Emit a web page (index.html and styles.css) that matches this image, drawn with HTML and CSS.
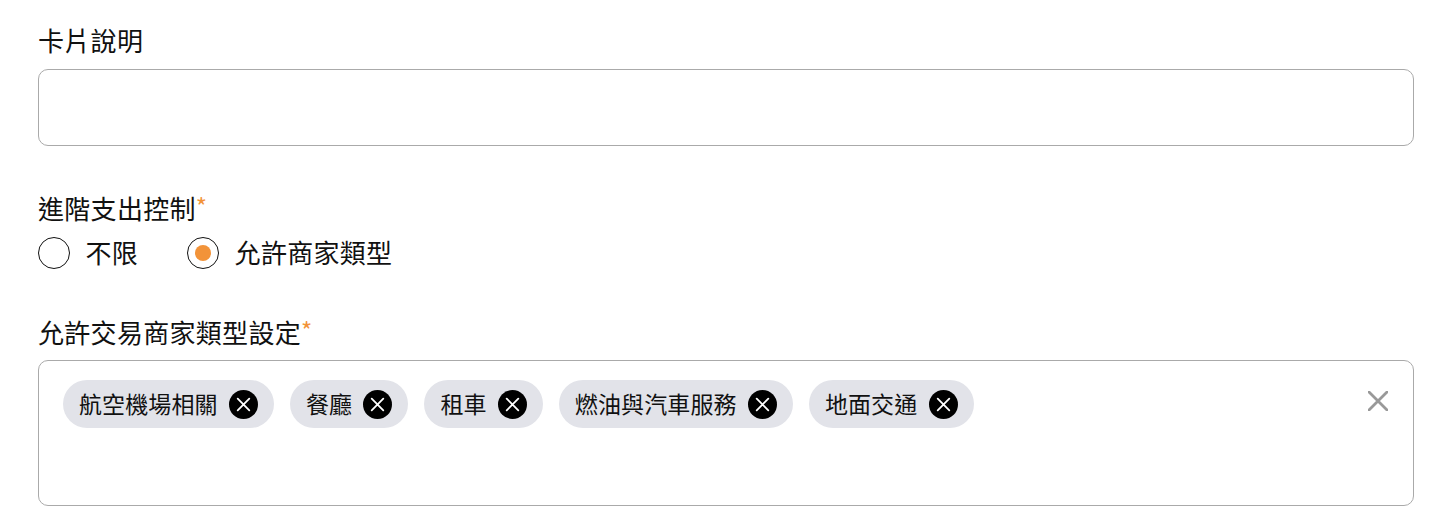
FILE: index.html
```html
<!DOCTYPE html>
<html>
<head>
<title>卡片設定</title>
<link rel="stylesheet" href="styles.css">
</head>
<body>
<div class="field field-desc">
  <div class="label">卡片說明</div>
  <div class="text-input"></div>
</div>

<div class="field field-control">
  <div class="label">進階支出控制<span class="req">*</span></div>
  <div class="radios">
    <div class="radio">
      <span class="circle"></span>
      <span class="radio-text">不限</span>
    </div>
    <div class="radio">
      <span class="circle checked"></span>
      <span class="radio-text">允許商家類型</span>
    </div>
  </div>
</div>

<div class="field">
  <div class="label">允許交易商家類型設定<span class="req">*</span></div>
  <div class="select-box">
    <div class="chips">
      <div class="chip"><span class="chip-text">航空機場相關</span><svg class="chip-x" viewBox="0 0 29 29"><circle cx="14.5" cy="14.5" r="14.5" fill="#000"/><path d="M8.7 8.7l11.6 11.6M20.3 8.7L8.7 20.3" stroke="#fff" stroke-width="1.8" stroke-linecap="round"/></svg></div>
      <div class="chip"><span class="chip-text">餐廳</span><svg class="chip-x" viewBox="0 0 29 29"><circle cx="14.5" cy="14.5" r="14.5" fill="#000"/><path d="M8.7 8.7l11.6 11.6M20.3 8.7L8.7 20.3" stroke="#fff" stroke-width="1.8" stroke-linecap="round"/></svg></div>
      <div class="chip"><span class="chip-text">租車</span><svg class="chip-x" viewBox="0 0 29 29"><circle cx="14.5" cy="14.5" r="14.5" fill="#000"/><path d="M8.7 8.7l11.6 11.6M20.3 8.7L8.7 20.3" stroke="#fff" stroke-width="1.8" stroke-linecap="round"/></svg></div>
      <div class="chip"><span class="chip-text">燃油與汽車服務</span><svg class="chip-x" viewBox="0 0 29 29"><circle cx="14.5" cy="14.5" r="14.5" fill="#000"/><path d="M8.7 8.7l11.6 11.6M20.3 8.7L8.7 20.3" stroke="#fff" stroke-width="1.8" stroke-linecap="round"/></svg></div>
      <div class="chip"><span class="chip-text">地面交通</span><svg class="chip-x" viewBox="0 0 29 29"><circle cx="14.5" cy="14.5" r="14.5" fill="#000"/><path d="M8.7 8.7l11.6 11.6M20.3 8.7L8.7 20.3" stroke="#fff" stroke-width="1.8" stroke-linecap="round"/></svg></div>
    </div>
    <svg class="clear-all" viewBox="0 0 20 20"><path d="M1 1l18 18M19 1L1 19" stroke="#999" stroke-width="2.8" stroke-linecap="round"/></svg>
  </div>
</div>
</body>
</html>
```

FILE: styles.css
```css
body {
  margin: 0;
  padding: 23px 28px 0 38px;
  background-color: #fff;
  color: #111;
  font-family: "Noto Sans CJK TC", "Liberation Sans", sans-serif;
  font-size: 26px;
  overflow: hidden;
}

.label {
  height: 36px;
  line-height: 34px;
  letter-spacing: 0.3px;
}

.req {
  color: #f29339;
  font-size: 24px;
  line-height: 20px;
  vertical-align: 3px;
}

.field-desc {
  margin-bottom: 45px;
}

.field-control {
  margin-bottom: 46px;
}

.text-input {
  height: 75px;
  margin-top: 10px;
  border: 1px solid #aaa;
  border-radius: 10px;
}

.radios {
  display: flex;
  gap: 49px;
  margin-top: 10px;
}

.radio {
  display: flex;
  align-items: center;
  gap: 15.5px;
  height: 32px;
}

.radio-text {
  line-height: 30px;
  height: 32px;
  letter-spacing: 0.3px;
}

.circle {
  box-sizing: border-box;
  width: 32px;
  height: 32px;
  border: 1px solid #111;
  border-radius: 50%;
  display: flex;
  align-items: center;
  justify-content: center;
}

.checked::after {
  content: "";
  width: 16px;
  height: 16px;
  border-radius: 50%;
  background-color: #f29339;
}

.select-box {
  display: flex;
  justify-content: space-between;
  box-sizing: border-box;
  height: 146px;
  margin-top: 9px;
  padding: 19px 25px 0 24px;
  border: 1px solid #aaa;
  border-radius: 10px;
}

.chips {
  display: flex;
  align-items: flex-start;
  gap: 16px;
}

.chip {
  display: flex;
  align-items: center;
  gap: 11.3px;
  height: 48px;
  padding: 0 16px;
  border-radius: 24px;
  background-color: #e2e3e9;
  font-size: 23px;
}

.chip-text {
  height: 48px;
  line-height: 46px;
  letter-spacing: 0.1px;
}

.chip-x {
  width: 29px;
  height: 29px;
}

.clear-all {
  width: 20px;
  height: 20px;
  margin-top: 11px;
}
```
